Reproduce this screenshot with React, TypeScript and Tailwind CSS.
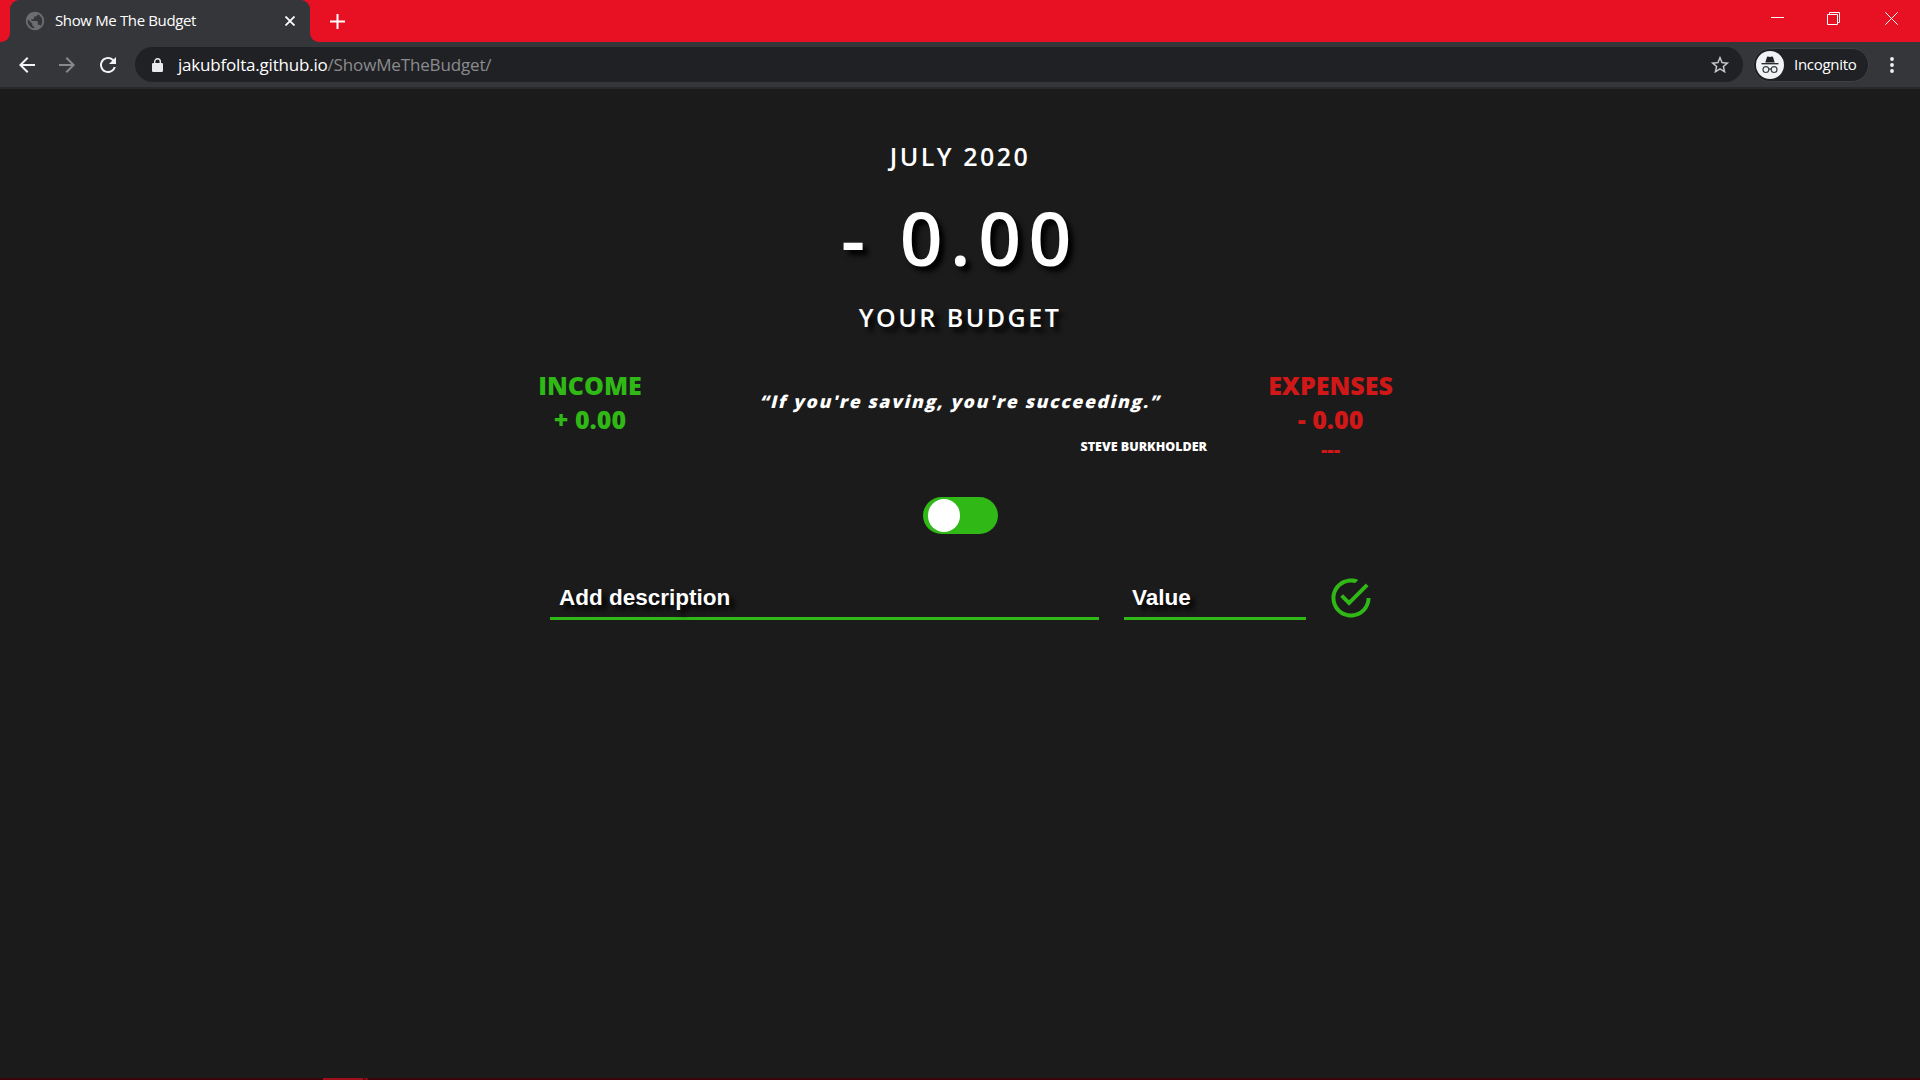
import { IoMdCheckmarkCircleOutline } from "react-icons/io";
import { MdArrowBack, MdArrowForward, MdRefresh, MdStarBorder, MdPublic } from "react-icons/md";

function IncognitoIcon() {
  return (
    <svg viewBox="0 0 28 28" className="size-7 shrink-0">
      <circle cx="14" cy="14" r="14" fill="#f1f3f4" />
      <path d="M9.3 11.4 10.9 6.2q.3-.8 1.1-.6l2 .5 2-.5q.8-.2 1.1.6l1.6 5.2z" fill="#202124" />
      <path d="M5.5 12.7h17" stroke="#202124" strokeWidth="1.3" />
      <g fill="none" stroke="#3c4043" strokeWidth="1.2">
        <circle cx="9.9" cy="18.6" r="2.9" />
        <circle cx="18.1" cy="18.6" r="2.9" />
        <path d="M12.8 18.4q1.2-.9 2.4 0" />
      </g>
    </svg>
  );
}

function TabStrip() {
  return (
    <div className="flex h-[42px] bg-[#e81123]">
      <div className="flex w-[10px] bg-[#35363a]">
        <div className="flex-1 rounded-br-[9px] bg-[#e81123]" />
      </div>
      <div className="flex w-[300px] items-center rounded-t-[9px] bg-[#35363a] pl-[14px] pr-[15px]">
        <MdPublic className="size-[22px] shrink-0 text-[#6b6d70]" />
        <span className="ml-[9px] flex-1 whitespace-nowrap pb-[2px] text-[15px] leading-5 tracking-[-0.36px] text-white">Show Me The Budget</span>
        <svg viewBox="0 0 10 10" className="size-[10px]" stroke="#fff" strokeWidth="1.8">
          <path d="M.5.5l9 9M9.5.5l-9 9" />
        </svg>
      </div>
      <div className="flex flex-1 bg-[#35363a]">
        <div className="flex flex-1 items-center rounded-bl-[9px] bg-[#e81123] pl-5">
          <svg viewBox="0 0 15 15" className="size-[15px]" stroke="#fff" strokeWidth="2">
            <path d="M7.5 0v15M0 7.5h15" />
          </svg>
          <div className="ml-auto flex items-center gap-[43px] pb-[5px] pr-[22px]">
            <svg viewBox="0 0 13 13" className="size-[13px]" stroke="#fff">
              <path d="M0 5.5h13" />
            </svg>
            <svg viewBox="0 0 13 13" className="size-[13px]" stroke="#fff" fill="none">
              <path d="M.5 2.5h10v10h-10zM2.5 2.5v-2h10v10h-2" />
            </svg>
            <svg viewBox="0 0 13 13" className="ml-[2px] size-[13px]" stroke="#fff">
              <path d="M.3.3l12.4 12.4M12.7.3L.3 12.7" />
            </svg>
          </div>
        </div>
      </div>
    </div>
  );
}

function Toolbar() {
  return (
    <div className="flex h-[47px] items-center border-b-2 border-[#28292b] bg-[#35363a] pl-[15px] pr-4">
      <MdArrowBack className="size-6 text-[#f1f3f4]" />
      <MdArrowForward className="ml-4 size-6 text-[#88898c]" />
      <MdRefresh className="ml-[17px] size-6 text-[#f1f3f4]" />
      <div className="ml-[15px] flex h-[35px] w-[1608px] items-center rounded-full bg-[#202124] pl-[17px] pr-[12px]">
        <svg viewBox="0 0 11 14" className="h-[14px] w-[11px]" fill="#e8eaed">
          <rect y="5" width="11" height="9" rx="1.2" />
          <path d="M2.7 5.5V3.6a2.8 2.8 0 0 1 5.6 0v1.9" fill="none" stroke="#e8eaed" strokeWidth="1.4" />
        </svg>
        <div className="ml-[15px] flex-1 whitespace-nowrap text-[17px] leading-6 text-[#8b8c8f]">
          <span className="tracking-[-0.2px] text-white">jakubfolta.github.io</span>
          <span className="tracking-[-0.15px]">/ShowMeTheBudget/</span>
        </div>
        <MdStarBorder className="size-[22px] text-[#c8cacd]" />
      </div>
      <div className="ml-[10px] flex h-[34px] w-[116px] items-center rounded-full border border-[#3f4044] bg-[#202124] pl-[2px]">
        <IncognitoIcon />
        <span className="ml-[10px] pb-[2px] text-[15px] leading-5 tracking-[-0.3px] text-white">Incognito</span>
      </div>
      <svg viewBox="0 0 4 16" className="ml-[21px] h-4 w-1" fill="#f1f3f4">
        <circle cx="2" cy="2" r="1.9" />
        <circle cx="2" cy="8" r="1.9" />
        <circle cx="2" cy="14" r="1.9" />
      </svg>
    </div>
  );
}

function Budget() {
  return (
    <main className="mx-auto flex w-[902px] flex-1 flex-col pt-[50px] font-semibold text-white">
      <div className="text-center text-[25px] leading-[34px] tracking-[2.5px]">JULY 2020</div>
      <div className="mt-[13px] text-center text-[75px] leading-[102px] tracking-[7.5px] [text-shadow:5px_5px_5px_#000]">- 0.00</div>
      <div className="mt-[12px] text-center text-[25px] leading-[34px] tracking-[2.5px] [text-shadow:5px_5px_5px_#000]">YOUR BUDGET</div>
      <div className="mt-[34px] grid grid-cols-[162px_1fr_161px] font-extrabold">
        <div className="text-center text-[25px] leading-[34px] text-[#2fb816]">
          <div>INCOME</div>
          <div>+ 0.00</div>
        </div>
        <div className="pt-[21px]">
          <div className="-skew-x-[14deg] pl-[2px] text-center text-[17.5px] leading-6 tracking-[1.75px]">“If you're saving, you're succeeding.”</div>
          <div className="mt-[25px] pr-[43px] text-right text-[12.5px] leading-[18px]">STEVE BURKHOLDER</div>
        </div>
        <div className="text-center text-[25px] leading-[34px] text-[#d01818]">
          <div>EXPENSES</div>
          <div>- 0.00</div>
          <div className="pt-[2px] text-[20px] leading-[24px]">---</div>
        </div>
      </div>
      <div className="mt-[35px] flex justify-center">
        <div className="flex h-[37px] w-[75px] items-center rounded-full bg-[#2fb816] pl-[5px]">
          <div className="h-[33px] w-[32px] rounded-full bg-white" />
        </div>
      </div>
      <div className="mt-[38px] flex items-end pl-[41px] font-['Liberation_Sans'] text-[22.5px] font-bold leading-[28px] [text-shadow:5px_5px_5px_#000]">
        <div className="h-[48px] w-[549px] border-b-[3px] border-[#2fb816] pl-[9px] pt-[12px]">Add description</div>
        <div className="ml-[25px] h-[48px] w-[182px] border-b-[3px] border-[#2fb816] pl-[8px] pt-[12px]">Value</div>
        <IoMdCheckmarkCircleOutline className="-mb-[2px] ml-[21px] size-[48px] text-[#2fb816]" />
      </div>
    </main>
  );
}

export default function App() {
  return (
    <div className="flex h-screen w-full flex-col overflow-hidden bg-[#1b1b1b] font-['Open_Sans',sans-serif]">
      <TabStrip />
      <Toolbar />
      <Budget />
      <div className="flex h-[2px] bg-[#3a0409]">
        <div className="ml-[323px] w-[40px] bg-[#a00d1b]" />
        <div className="ml-px w-[4px] bg-[#7d0a15]" />
      </div>
    </div>
  );
}
